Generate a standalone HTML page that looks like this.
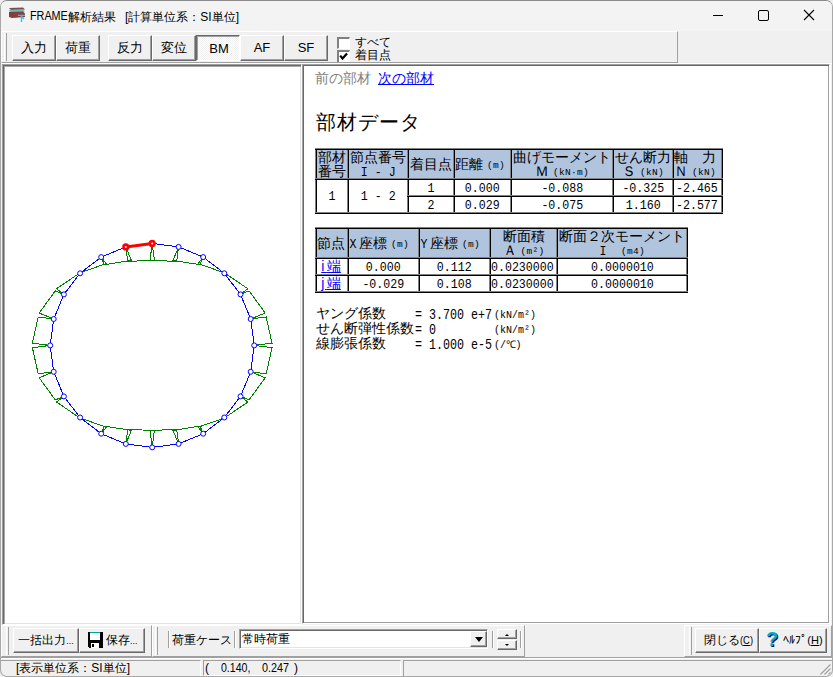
<!DOCTYPE html><html><head><meta charset="utf-8"><style>
*{margin:0;padding:0;box-sizing:border-box}
html,body{width:833px;height:677px;overflow:hidden}
body{background:#f0f0f0;font-family:"Liberation Sans",sans-serif;position:relative;color:#000}
.a{position:absolute;white-space:nowrap}
.btn{position:absolute;background:#f0f0f0;border-top:1px solid #fff;border-left:1px solid #fff;border-right:1px solid #696969;border-bottom:1px solid #696969;box-shadow:inset -1px -1px #a0a0a0;font-size:13px;text-align:center;white-space:nowrap}
.dn{border-top:1px solid #696969;border-left:1px solid #696969;border-right:1px solid #fff;border-bottom:1px solid #fff;box-shadow:inset 1px 1px #a0a0a0;background-color:#fff;background-image:linear-gradient(45deg,#f0f0f0 25%,transparent 25%,transparent 75%,#f0f0f0 75%),linear-gradient(45deg,#f0f0f0 25%,transparent 25%,transparent 75%,#f0f0f0 75%);background-size:2px 2px;background-position:0 0,1px 1px}
.sunk{position:absolute;background:#fff;border-top:1px solid #a0a0a0;border-left:1px solid #a0a0a0;border-right:1px solid #fff;border-bottom:1px solid #fff;box-shadow:inset 1px 1px #696969,inset -1px -1px #e3e3e3}
.etch{position:absolute;border-top:1px solid #fff;border-left:1px solid #fff;border-right:1px solid #a0a0a0;border-bottom:1px solid #a0a0a0}
.stp{position:absolute;border-top:1px solid #a0a0a0;border-left:1px solid #a0a0a0;border-right:1px solid #fff;border-bottom:1px solid #fff}
.grip{position:absolute;width:3px;border-left:1px solid #fff;border-right:1px solid #a0a0a0}
.vsep{position:absolute;width:2px;border-left:1px solid #a0a0a0;border-right:1px solid #fff}
.ln{position:absolute}
.c{position:absolute;text-align:center;white-space:nowrap;overflow:hidden}
.hd{background:#b0c4de}
.m{font-family:"Liberation Mono",monospace;display:inline-block;transform-origin:50% 0}
.j{font-size:13px}
.cb{position:absolute;width:13px;height:12px;background:#fff;border-top:2px solid #808080;border-left:2px solid #808080;border-right:1px solid #fff;border-bottom:1px solid #fff}
</style></head><body>
<div class="a" style="left:0;top:0;width:833px;height:677px;border:1px solid #a8a8a8;border-top-color:#8a8a8a;border-radius:7px"></div>
<div class="a" style="left:1px;top:1px;width:831px;height:30px;background:#f3f3f3;border-radius:6px 6px 0 0"></div>
<svg class="a" style="left:4px;top:3px" width="24" height="24" viewBox="0 0 24 24">
<path d="M5 5 L19 4.5 L21 6.5 L7 7Z" fill="#6a2c2c" opacity="0.85"/><path d="M5 6.8 L20 6.5 L20.5 8.8 L6 9.3Z" fill="#5fb5b0" opacity="0.9"/><path d="M5 9 L19 8.5 L21 10.5 L21 14 L8 15 L5 14Z" fill="#7a2a2a" opacity="0.9"/>
<path d="M14 12.4 H21 M17.5 12.4 V19 M17.5 13.5 L20 16" stroke="#28c4ff" stroke-width="1.4" fill="none"/></svg>
<div class="a" style="left:30px;top:9px;font-size:12px;transform:scaleX(0.9);transform-origin:0 0">FRAME</div>
<div class="a" style="left:68px;top:9px;font-size:12px">解析結果</div>
<div class="a" style="left:125px;top:9px;font-size:12px">[計算単位系：SI単位]</div>
<div class="a" style="left:713px;top:15px;width:10px;height:1px;background:#000"></div>
<div class="a" style="left:758px;top:10px;width:11px;height:11px;border:1px solid #000;border-radius:2px"></div>
<svg class="a" style="left:803px;top:9px" width="12" height="12" viewBox="0 0 12 12"><path d="M1 1L11 11M11 1L1 11" stroke="#000" stroke-width="1.1"/></svg>
<div class="etch" style="left:1px;top:31px;width:677px;height:32px"></div>
<div class="grip" style="left:4px;top:33px;height:28px"></div>
<div class="btn " style="left:12px;top:35px;width:44px;height:26px;line-height:23px;">入力</div>
<div class="btn " style="left:56px;top:35px;width:44px;height:26px;line-height:23px;">荷重</div>
<div class="btn " style="left:108px;top:35px;width:44px;height:26px;line-height:23px;">反力</div>
<div class="btn " style="left:152px;top:35px;width:44px;height:26px;line-height:23px;">変位</div>
<div class="btn dn" style="left:196px;top:35px;width:44px;height:26px;line-height:23px;line-height:24px;padding-top:1px;padding-left:2px">BM</div>
<div class="btn " style="left:240px;top:35px;width:44px;height:26px;line-height:23px;line-height:24px">AF</div>
<div class="btn " style="left:284px;top:35px;width:44px;height:26px;line-height:23px;line-height:24px">SF</div>
<div class="cb" style="left:337px;top:37px"></div>
<div class="a" style="left:337px;top:50px;width:13px;height:12px;overflow:hidden"><div class="cb" style="left:0;top:0;height:13px"></div></div>
<svg class="a" style="left:339px;top:52px" width="9" height="9" viewBox="0 0 9 9"><path d="M1.2 3.6 L3.5 6.5 L8 1.5" stroke="#000" stroke-width="2.2" fill="none"/></svg>
<div class="a" style="left:355px;top:36px;font-size:12px;line-height:13px">すべて</div>
<div class="a" style="left:355px;top:49px;font-size:12px;line-height:13px">着目点</div>
<div class="a" style="left:1px;top:63px;width:831px;height:1px;background:#fff"></div>
<div class="sunk" style="left:2px;top:64px;width:300px;height:561px;box-shadow:inset 1px 1px #696969,inset 2px 2px #a8a8a8,inset -1px -1px #e3e3e3"></div>
<div class="sunk" style="left:302px;top:64px;width:528px;height:560px;box-shadow:inset 1px 1px #696969,inset -1px -1px #a0a0a0"></div>
<div class="a" style="left:830px;top:63px;width:1px;height:562px;background:#fff"></div>
<svg class="a" style="left:0;top:0" width="300" height="620" viewBox="0 0 300 620"><path d="M152.2 243.4L154.4 260.3L127.7 261.4L125.8 246.9M125.8 246.9L131.4 260.4L104.4 264.7L101.2 257.1M101.2 257.1L106.2 263.6L79.8 272.9L80.1 273.3M80.1 273.3L79.7 273.0L56.5 288.8L63.9 294.4M63.9 294.4L55.3 290.9L39.2 313.0L53.7 319.0M53.7 319.0L38.2 317.0L32.4 343.1L50.2 345.4M50.2 345.4L32.4 347.7L38.2 373.8L53.7 371.8M53.7 371.8L39.2 377.8L55.3 399.9L63.9 396.4M63.9 396.4L56.5 402.0L79.7 417.8L80.1 417.5M80.1 417.5L79.8 417.9L106.2 427.2L101.2 433.7M101.2 433.7L104.4 426.1L131.4 430.4L125.8 443.9M125.8 443.9L127.7 429.4L154.4 430.5L152.2 447.4M152.2 447.4L150.0 430.5L176.7 429.4L178.6 443.9M178.6 443.9L173.0 430.4L200.0 426.1L203.2 433.7M203.2 433.7L198.2 427.2L224.6 417.9L224.3 417.5M224.3 417.5L224.7 417.8L247.9 402.0L240.5 396.4M240.5 396.4L249.1 399.9L265.2 377.8L250.7 371.8M250.7 371.8L266.2 373.8L272.0 347.7L254.2 345.4M254.2 345.4L272.0 343.1L266.2 317.0L250.7 319.0M250.7 319.0L265.2 313.0L249.1 290.9L240.5 294.4M240.5 294.4L247.9 288.8L224.7 273.0L224.3 273.3M224.3 273.3L224.6 272.9L198.2 263.6L203.2 257.1M203.2 257.1L200.0 264.7L173.0 260.4L178.6 246.9M178.6 246.9L176.7 261.4L150.0 260.3L152.2 243.4" stroke="#008000" stroke-width="1" fill="none" shape-rendering="crispEdges"/>
<path d="M125.8 246.9L101.2 257.1M101.2 257.1L80.1 273.3M80.1 273.3L63.9 294.4M63.9 294.4L53.7 319.0M53.7 319.0L50.2 345.4M50.2 345.4L53.7 371.8M53.7 371.8L63.9 396.4M63.9 396.4L80.1 417.5M80.1 417.5L101.2 433.7M101.2 433.7L125.8 443.9M125.8 443.9L152.2 447.4M152.2 447.4L178.6 443.9M178.6 443.9L203.2 433.7M203.2 433.7L224.3 417.5M224.3 417.5L240.5 396.4M240.5 396.4L250.7 371.8M250.7 371.8L254.2 345.4M254.2 345.4L250.7 319.0M250.7 319.0L240.5 294.4M240.5 294.4L224.3 273.3M224.3 273.3L203.2 257.1M203.2 257.1L178.6 246.9M178.6 246.9L152.2 243.4" stroke="#0000ff" stroke-width="1" fill="none" shape-rendering="crispEdges"/>
<path d="M152.2 243.4L125.8 246.9" stroke="#ff0000" stroke-width="3" fill="none"/>
<circle cx="152.2" cy="243.4" r="2.3" stroke="#ff0000" stroke-width="2.6" fill="#fff"/>
<circle cx="125.8" cy="246.9" r="2.3" stroke="#ff0000" stroke-width="2.6" fill="#fff"/>
<circle cx="101.2" cy="257.1" r="2.5" stroke="#0000ff" stroke-width="1" fill="#fff"/>
<circle cx="80.1" cy="273.3" r="2.5" stroke="#0000ff" stroke-width="1" fill="#fff"/>
<circle cx="63.9" cy="294.4" r="2.5" stroke="#0000ff" stroke-width="1" fill="#fff"/>
<circle cx="53.7" cy="319.0" r="2.5" stroke="#0000ff" stroke-width="1" fill="#fff"/>
<circle cx="50.2" cy="345.4" r="2.5" stroke="#0000ff" stroke-width="1" fill="#fff"/>
<circle cx="53.7" cy="371.8" r="2.5" stroke="#0000ff" stroke-width="1" fill="#fff"/>
<circle cx="63.9" cy="396.4" r="2.5" stroke="#0000ff" stroke-width="1" fill="#fff"/>
<circle cx="80.1" cy="417.5" r="2.5" stroke="#0000ff" stroke-width="1" fill="#fff"/>
<circle cx="101.2" cy="433.7" r="2.5" stroke="#0000ff" stroke-width="1" fill="#fff"/>
<circle cx="125.8" cy="443.9" r="2.5" stroke="#0000ff" stroke-width="1" fill="#fff"/>
<circle cx="152.2" cy="447.4" r="2.5" stroke="#0000ff" stroke-width="1" fill="#fff"/>
<circle cx="178.6" cy="443.9" r="2.5" stroke="#0000ff" stroke-width="1" fill="#fff"/>
<circle cx="203.2" cy="433.7" r="2.5" stroke="#0000ff" stroke-width="1" fill="#fff"/>
<circle cx="224.3" cy="417.5" r="2.5" stroke="#0000ff" stroke-width="1" fill="#fff"/>
<circle cx="240.5" cy="396.4" r="2.5" stroke="#0000ff" stroke-width="1" fill="#fff"/>
<circle cx="250.7" cy="371.8" r="2.5" stroke="#0000ff" stroke-width="1" fill="#fff"/>
<circle cx="254.2" cy="345.4" r="2.5" stroke="#0000ff" stroke-width="1" fill="#fff"/>
<circle cx="250.7" cy="319.0" r="2.5" stroke="#0000ff" stroke-width="1" fill="#fff"/>
<circle cx="240.5" cy="294.4" r="2.5" stroke="#0000ff" stroke-width="1" fill="#fff"/>
<circle cx="224.3" cy="273.3" r="2.5" stroke="#0000ff" stroke-width="1" fill="#fff"/>
<circle cx="203.2" cy="257.1" r="2.5" stroke="#0000ff" stroke-width="1" fill="#fff"/>
<circle cx="178.6" cy="246.9" r="2.5" stroke="#0000ff" stroke-width="1" fill="#fff"/></svg>
<div class="a" style="left:315px;top:70px;font-size:14px;color:#808080">前の部材</div>
<div class="a" style="left:378px;top:70px;font-size:14px;color:#0000ff;text-decoration:underline">次の部材</div>
<div class="a" style="left:316px;top:109px;font-size:20px;letter-spacing:1px">部材データ</div>
<div class="ln" style="left:315px;top:148px;width:408px;height:66px;background:#fff"></div>
<div class="ln hd" style="left:315px;top:148px;width:408px;height:31px"></div>
<div class="c" style="left:317px;top:150px;width:30px;height:28px;font-size:14px;line-height:14px;padding-top:0px">部材<br>番号</div>
<div class="c" style="left:349px;top:150px;width:58px;height:28px;font-size:14px;line-height:14px;padding-top:0px">節点番号<br><span class="m" style="font-size:13.5px;transform:scaleX(0.86);transform-origin:50% 0">I - J</span></div>
<div class="c" style="left:409px;top:150px;width:44px;height:28px;font-size:14px;line-height:28px">着目点</div>
<div class="c" style="left:455px;top:150px;width:55px;height:28px;font-size:14px;line-height:28px;text-align:left">距離 <span class="m" style="font-size:9.5px;letter-spacing:0.3px;vertical-align:1px">(m)</span></div>
<div class="c" style="left:512px;top:150px;width:100px;height:28px;font-size:14px;line-height:14px;padding-top:0px">曲げモーメント<br>Ｍ <span class="m" style="font-size:9.5px;letter-spacing:0.3px;vertical-align:1px">(kN·m)</span></div>
<div class="c" style="left:614px;top:150px;width:58px;height:28px;font-size:14px;line-height:14px;padding-top:0px">せん断力<br>Ｓ <span class="m" style="font-size:9.5px;letter-spacing:0.3px;vertical-align:1px">(kN)</span></div>
<div class="c" style="left:674px;top:150px;width:47px;height:28px;font-size:14px;line-height:14px;padding-top:0px;text-align:left">軸　力<br>Ｎ <span class="m" style="font-size:9.5px;letter-spacing:0.3px;vertical-align:1px">(kN)</span></div>
<div class="c" style="left:317px;top:180px;width:30px;height:32px;line-height:29px"><span class="m" style="font-size:13.5px;transform:scaleX(0.86);transform-origin:50% 0">1</span></div>
<div class="c" style="left:349px;top:180px;width:58px;height:32px;line-height:29px"><span class="m" style="font-size:13.5px;transform:scaleX(0.86);transform-origin:50% 0">1 - 2</span></div>
<div class="c" style="left:409px;top:180px;width:44px;height:15px;line-height:13px"><span class="m" style="font-size:13.5px;transform:scaleX(0.86);transform-origin:50% 0">1</span></div>
<div class="c" style="left:455px;top:180px;width:55px;height:15px;line-height:13px"><span class="m" style="font-size:13.5px;transform:scaleX(0.86);transform-origin:50% 0">0.000</span></div>
<div class="c" style="left:512px;top:180px;width:100px;height:15px;line-height:13px"><span class="m" style="font-size:13.5px;transform:scaleX(0.86);transform-origin:50% 0">-0.088</span></div>
<div class="c" style="left:614px;top:180px;width:58px;height:15px;line-height:13px"><span class="m" style="font-size:13.5px;transform:scaleX(0.86);transform-origin:50% 0">-0.325</span></div>
<div class="c" style="left:674px;top:180px;width:47px;height:15px;line-height:13px;text-align:left;padding-left:2px;overflow:visible"><span class="m" style="font-size:13.5px;transform:scaleX(0.86);transform-origin:0 0">-2.465</span></div>
<div class="c" style="left:409px;top:197px;width:44px;height:15px;line-height:13px"><span class="m" style="font-size:13.5px;transform:scaleX(0.86);transform-origin:50% 0">2</span></div>
<div class="c" style="left:455px;top:197px;width:55px;height:15px;line-height:13px"><span class="m" style="font-size:13.5px;transform:scaleX(0.86);transform-origin:50% 0">0.029</span></div>
<div class="c" style="left:512px;top:197px;width:100px;height:15px;line-height:13px"><span class="m" style="font-size:13.5px;transform:scaleX(0.86);transform-origin:50% 0">-0.075</span></div>
<div class="c" style="left:614px;top:197px;width:58px;height:15px;line-height:13px"><span class="m" style="font-size:13.5px;transform:scaleX(0.86);transform-origin:50% 0">1.160</span></div>
<div class="c" style="left:674px;top:197px;width:47px;height:15px;line-height:13px;text-align:left;padding-left:2px;overflow:visible"><span class="m" style="font-size:13.5px;transform:scaleX(0.86);transform-origin:0 0">-2.577</span></div>
<div class="ln" style="left:315px;top:148px;width:1px;height:66px;background:#808080"></div>
<div class="ln" style="left:316px;top:148px;width:1px;height:66px;background:#000"></div>
<div class="ln" style="left:347px;top:148px;width:1px;height:66px;background:#808080"></div>
<div class="ln" style="left:348px;top:149px;width:1px;height:65px;background:#000"></div>
<div class="ln" style="left:407px;top:148px;width:1px;height:66px;background:#808080"></div>
<div class="ln" style="left:408px;top:149px;width:1px;height:65px;background:#000"></div>
<div class="ln" style="left:453px;top:148px;width:1px;height:66px;background:#808080"></div>
<div class="ln" style="left:454px;top:149px;width:1px;height:65px;background:#000"></div>
<div class="ln" style="left:510px;top:148px;width:1px;height:66px;background:#808080"></div>
<div class="ln" style="left:511px;top:149px;width:1px;height:65px;background:#000"></div>
<div class="ln" style="left:612px;top:148px;width:1px;height:66px;background:#808080"></div>
<div class="ln" style="left:613px;top:149px;width:1px;height:65px;background:#000"></div>
<div class="ln" style="left:672px;top:148px;width:1px;height:66px;background:#808080"></div>
<div class="ln" style="left:673px;top:149px;width:1px;height:65px;background:#000"></div>
<div class="ln" style="left:721px;top:148px;width:1px;height:66px;background:#808080"></div>
<div class="ln" style="left:722px;top:148px;width:1px;height:66px;background:#000"></div>
<div class="ln" style="left:315px;top:148px;width:408px;height:1px;background:#808080"></div>
<div class="ln" style="left:315px;top:149px;width:408px;height:1px;background:#000"></div>
<div class="ln" style="left:315px;top:178px;width:408px;height:1px;background:#808080"></div>
<div class="ln" style="left:315px;top:179px;width:408px;height:1px;background:#000"></div>
<div class="ln" style="left:407px;top:195px;width:316px;height:1px;background:#808080"></div>
<div class="ln" style="left:407px;top:196px;width:316px;height:1px;background:#000"></div>
<div class="ln" style="left:315px;top:212px;width:408px;height:1px;background:#808080"></div>
<div class="ln" style="left:315px;top:213px;width:408px;height:1px;background:#000"></div>
<div class="ln" style="left:315px;top:227px;width:373px;height:66px;background:#fff"></div>
<div class="ln hd" style="left:315px;top:227px;width:373px;height:31px"></div>
<div class="c" style="left:317px;top:229px;width:30px;height:28px;font-size:14px;line-height:28px;text-align:left">節点</div>
<div class="c" style="left:349px;top:229px;width:69px;height:28px;font-size:14px;line-height:28px;text-align:left"><span class="m" style="font-size:13.5px;transform:scaleX(0.86);transform-origin:50% 0">X</span><span style="margin-left:2px">座標</span> <span class="m" style="font-size:9.5px;letter-spacing:0.3px;vertical-align:1px">(m)</span></div>
<div class="c" style="left:420px;top:229px;width:69px;height:28px;font-size:14px;line-height:28px;text-align:left"><span class="m" style="font-size:13.5px;transform:scaleX(0.86);transform-origin:50% 0">Y</span><span style="margin-left:2px">座標</span> <span class="m" style="font-size:9.5px;letter-spacing:0.3px;vertical-align:1px">(m)</span></div>
<div class="c" style="left:491px;top:229px;width:65px;height:28px;font-size:14px;line-height:14px;padding-top:0px">断面積<br>Ａ <span class="m" style="font-size:9.5px;letter-spacing:0.3px;vertical-align:1px">(m²)</span></div>
<div class="c" style="left:558px;top:229px;width:128px;height:28px;font-size:14px;line-height:14px;padding-top:0px">断面２次モーメント<br><span class="m" style="font-size:13.5px;transform:scaleX(0.86);transform-origin:50% 0">I</span>　<span class="m" style="font-size:9.5px;letter-spacing:0.3px;vertical-align:1px">(m4)</span></div>
<div class="c" style="left:317px;top:259px;width:30px;height:15px;line-height:13px"><u style="color:#00f;font-size:14px;letter-spacing:2.5px;margin-left:-2px">i<span style="letter-spacing:0">端</span></u></div>
<div class="c" style="left:349px;top:259px;width:69px;height:15px;line-height:13px"><span class="m" style="font-size:13.5px;transform:scaleX(0.86);transform-origin:50% 0">0.000</span></div>
<div class="c" style="left:420px;top:259px;width:69px;height:15px;line-height:13px"><span class="m" style="font-size:13.5px;transform:scaleX(0.86);transform-origin:50% 0">0.112</span></div>
<div class="c" style="left:491px;top:259px;width:65px;height:15px;line-height:13px;text-align:left;overflow:visible"><span class="m" style="font-size:13.5px;transform:scaleX(0.86);transform-origin:0 0">0.0230000</span></div>
<div class="c" style="left:558px;top:259px;width:128px;height:15px;line-height:13px"><span class="m" style="font-size:13.5px;transform:scaleX(0.86);transform-origin:50% 0">0.0000010</span></div>
<div class="c" style="left:317px;top:276px;width:30px;height:15px;line-height:13px"><u style="color:#00f;font-size:14px;letter-spacing:2.5px;margin-left:-2px">j<span style="letter-spacing:0">端</span></u></div>
<div class="c" style="left:349px;top:276px;width:69px;height:15px;line-height:13px"><span class="m" style="font-size:13.5px;transform:scaleX(0.86);transform-origin:50% 0">-0.029</span></div>
<div class="c" style="left:420px;top:276px;width:69px;height:15px;line-height:13px"><span class="m" style="font-size:13.5px;transform:scaleX(0.86);transform-origin:50% 0">0.108</span></div>
<div class="c" style="left:491px;top:276px;width:65px;height:15px;line-height:13px;text-align:left;overflow:visible"><span class="m" style="font-size:13.5px;transform:scaleX(0.86);transform-origin:0 0">0.0230000</span></div>
<div class="c" style="left:558px;top:276px;width:128px;height:15px;line-height:13px"><span class="m" style="font-size:13.5px;transform:scaleX(0.86);transform-origin:50% 0">0.0000010</span></div>
<div class="ln" style="left:315px;top:227px;width:1px;height:66px;background:#808080"></div>
<div class="ln" style="left:316px;top:227px;width:1px;height:66px;background:#000"></div>
<div class="ln" style="left:347px;top:227px;width:1px;height:66px;background:#808080"></div>
<div class="ln" style="left:348px;top:228px;width:1px;height:65px;background:#000"></div>
<div class="ln" style="left:418px;top:227px;width:1px;height:66px;background:#808080"></div>
<div class="ln" style="left:419px;top:228px;width:1px;height:65px;background:#000"></div>
<div class="ln" style="left:489px;top:227px;width:1px;height:66px;background:#808080"></div>
<div class="ln" style="left:490px;top:228px;width:1px;height:65px;background:#000"></div>
<div class="ln" style="left:556px;top:227px;width:1px;height:66px;background:#808080"></div>
<div class="ln" style="left:557px;top:228px;width:1px;height:65px;background:#000"></div>
<div class="ln" style="left:686px;top:227px;width:1px;height:66px;background:#808080"></div>
<div class="ln" style="left:687px;top:227px;width:1px;height:66px;background:#000"></div>
<div class="ln" style="left:315px;top:227px;width:373px;height:1px;background:#808080"></div>
<div class="ln" style="left:315px;top:228px;width:373px;height:1px;background:#000"></div>
<div class="ln" style="left:315px;top:257px;width:373px;height:1px;background:#808080"></div>
<div class="ln" style="left:315px;top:258px;width:373px;height:1px;background:#000"></div>
<div class="ln" style="left:315px;top:274px;width:373px;height:1px;background:#808080"></div>
<div class="ln" style="left:315px;top:275px;width:373px;height:1px;background:#000"></div>
<div class="ln" style="left:315px;top:291px;width:373px;height:1px;background:#808080"></div>
<div class="ln" style="left:315px;top:292px;width:373px;height:1px;background:#000"></div>
<div class="a" style="left:316px;top:306.0px;font-size:14px;line-height:15px">ヤング係数</div>
<div class="a" style="left:415px;top:306.0px;line-height:15px"><span class="m" style="font-size:14px;transform:scaleX(0.833);transform-origin:0 0;white-space:pre">= 3.700 e+7</span></div>
<div class="a" style="left:494px;top:305.0px;line-height:15px"><span class="m" style="font-size:10.5px;transform:scaleX(0.95);transform-origin:0 0">(kN/m²)</span></div>
<div class="a" style="left:316px;top:320.8px;font-size:14px;line-height:15px">せん断弾性係数</div>
<div class="a" style="left:415px;top:320.8px;line-height:15px"><span class="m" style="font-size:14px;transform:scaleX(0.833);transform-origin:0 0;white-space:pre">= 0</span></div>
<div class="a" style="left:494px;top:319.8px;line-height:15px"><span class="m" style="font-size:10.5px;transform:scaleX(0.95);transform-origin:0 0">(kN/m²)</span></div>
<div class="a" style="left:316px;top:335.6px;font-size:14px;line-height:15px">線膨張係数</div>
<div class="a" style="left:415px;top:335.6px;line-height:15px"><span class="m" style="font-size:14px;transform:scaleX(0.833);transform-origin:0 0;white-space:pre">= 1.000 e-5</span></div>
<div class="a" style="left:494px;top:334.6px;line-height:15px"><span class="m" style="font-size:10.5px;transform:scaleX(0.95);transform-origin:0 0">(/℃)</span></div>
<div class="etch" style="left:1px;top:625px;width:151px;height:32px"></div>
<div class="grip" style="left:6px;top:627px;height:28px"></div>
<div class="btn" style="left:13px;top:628px;width:66px;height:25px;line-height:22px;font-size:12px">一括出力<span style="font-size:9px">...</span></div>
<div class="btn" style="left:79px;top:628px;width:66px;height:25px"></div>
<div class="a" style="left:106px;top:632px;font-size:12px;line-height:17px">保存<span style="font-size:9px">...</span></div>
<svg class="a" style="left:88px;top:632px" width="15" height="16" viewBox="0 0 15 16" shape-rendering="crispEdges"><path d="M0 0H15V15L14 16H1L0 15Z" fill="#000"/><rect x="2" y="0" width="10" height="1" fill="#00a0a0"/><rect x="2" y="1" width="10" height="7" fill="#fff"/><rect x="3" y="11" width="8" height="5" fill="#fff"/><rect x="4" y="12" width="2" height="3" fill="#000"/></svg>
<div class="etch" style="left:152px;top:625px;width:373px;height:32px"></div>
<div class="grip" style="left:155px;top:627px;height:28px"></div>
<div class="vsep" style="left:168px;top:631px;height:17px"></div>
<div class="a" style="left:172px;top:632px;font-size:12px;line-height:16px">荷重ケース</div>
<div class="vsep" style="left:234px;top:631px;height:17px"></div>
<div class="sunk" style="left:239px;top:629px;width:249px;height:20px"></div>
<div class="a" style="left:242px;top:631px;font-size:12px;line-height:16px">常時荷重</div>
<div class="btn" style="left:470px;top:631px;width:17px;height:16px"></div>
<svg class="a" style="left:474px;top:637px" width="10" height="6" viewBox="0 0 10 6"><path d="M1 0H9L5 5Z" fill="#000"/></svg>
<div class="vsep" style="left:492px;top:631px;height:17px"></div>
<div class="btn" style="left:497px;top:629px;width:20px;height:10px"></div>
<div class="btn" style="left:497px;top:640px;width:20px;height:10px"></div>
<svg class="a" style="left:504px;top:632px" width="6" height="16" viewBox="0 0 6 16"><path d="M1 4H5L3 2Z M1 12H5L3 14Z" fill="#000"/></svg>
<div class="vsep" style="left:520px;top:631px;height:17px"></div>
<div class="etch" style="left:684px;top:625px;width:148px;height:32px"></div>
<div class="grip" style="left:689px;top:627px;height:28px"></div>
<div class="btn" style="left:695px;top:628px;width:64px;height:25px;line-height:22px;font-size:12px;text-align:left;padding-left:8px">閉じる<span style="font-size:11px;display:inline-block;transform:scaleX(0.85);transform-origin:0 0">(<u>C</u>)</span></div>
<div class="btn" style="left:759px;top:628px;width:68px;height:25px;line-height:22px;font-size:12px;padding-left:20px">ﾍﾙﾌﾟ<span style="font-size:11px">(<u>H</u>)</span></div>
<div class="a" style="left:766px;top:628px;font-size:20px;line-height:22px;font-weight:bold;color:#00b0c0;text-shadow:1px 1px #000080">?</div>
<div class="a" style="left:1px;top:657px;width:831px;height:1px;background:#a0a0a0"></div>
<div class="a" style="left:1px;top:658px;width:831px;height:1px;background:#fff"></div>
<div class="stp" style="left:1px;top:660px;width:200px;height:16px;border-left:0;border-bottom:0;border-bottom-left-radius:6px"></div>
<div class="a" style="left:16px;top:660px;font-size:12px;line-height:16px">[表示単位系：SI単位]</div>
<div class="stp" style="left:203px;top:660px;width:198px;height:16px"></div>
<div class="a" style="left:205px;top:660px;font-size:12px;line-height:16px">(</div>
<div class="a" style="left:221px;top:660px;font-size:12px;line-height:16px;transform:scaleX(0.88);transform-origin:0 0">0.140,</div>
<div class="a" style="left:262px;top:660px;font-size:12px;line-height:16px;transform:scaleX(0.9);transform-origin:0 0">0.247</div>
<div class="a" style="left:294px;top:660px;font-size:12px;line-height:16px">)</div>
<div class="stp" style="left:403px;top:660px;width:429px;height:16px;border-right:0;border-bottom:0;border-bottom-right-radius:6px"></div>
<svg class="a" style="left:818px;top:662px" width="14" height="14" viewBox="0 0 14 14"><path d="M13 3L3 13M13 7L7 13M13 11L11 13" stroke="#fff" stroke-width="1.2"/><path d="M12.5 2.5L2.5 12.5M12.5 6.5L6.5 12.5M12.5 10.5L10.5 12.5" stroke="#a0a0a0" stroke-width="1.4"/></svg>
</body></html>
